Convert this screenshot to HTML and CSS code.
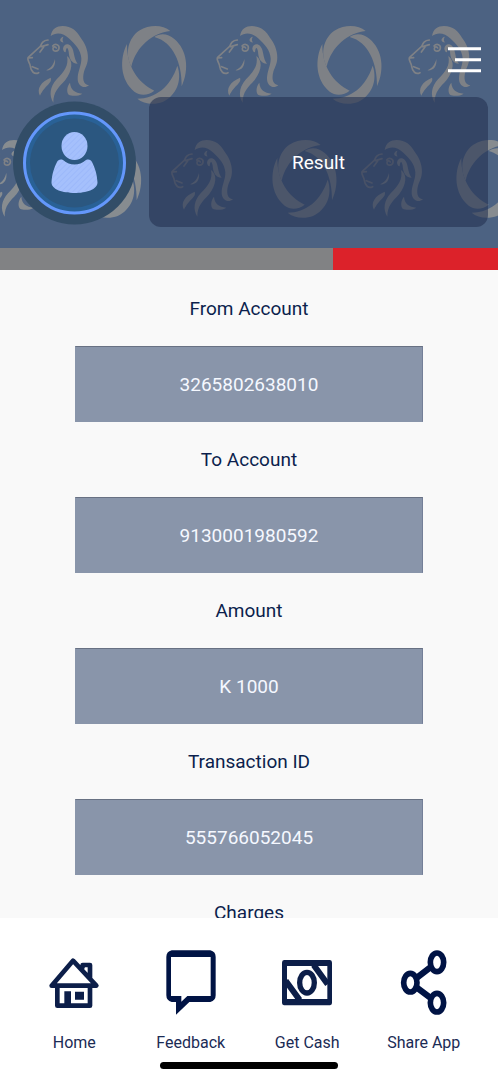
FILE: index.html
```html
<!DOCTYPE html>
<html lang="en">
<head>
<meta charset="utf-8">
<meta name="viewport" content="width=device-width, initial-scale=1">
<title>Result</title>
<link rel="stylesheet" href="styles.css">
</head>
<body>
<header class="header">
  <svg class="pattern" width="498" height="248" viewBox="0 0 1494 744" aria-hidden="true">
    <defs>
      <g id="lion">
        <path d="M72 30C76 8 90 0 108 0c27 1 42 14 54 35 12 16 17 27 20 42 6 30-4 42-10 60-5 20-3 38 15 41-14 12-33 3-34-18-1-22 12-42 11-63-1-25-20-44-36-59C110 20 88 18 72 30z"/>
        <path d="M121 90c20 15 16 44-5 72-20 22-36 35-36 68-14-22-10-48 10-70 23-23 37-42 31-70z"/>
        <path d="M72 155c6 17-17 22-32 54-11-21 3-42 32-54z"/>
        <path d="M130 170c2 22 15 30 37 33-12 8-32 8-41 3-8-10-4-27 4-36z"/>
        <path d="M109 68c2-19 27-19 32 12 3 17 7 27 12 33-19 0-26-17-27-36-3-14-7-15-9 2-5-1-7-5-8-11z"/>
        <path d="M85 99c3 23-10 36-27 34 14-6 22-16 27-34z"/>
        <path d="M101 39c5-7 9-8 9-6-4 7-2 13 1 16-8 1-12-4-10-10z"/>
        <g class="line">
          <path d="M64 42C49 43 45 52 41 61L5 94c-6 8 6 17 6 27 2 15 12 26 25 19M17 122l17 7M7 96l10-1M40 78l11-15M44 62l20-6M78 60c8-9 21-4 19 7-2 11-18 11-18 1 0-7 8-7 10-2"/>
        </g>
      </g>
      <g id="ring">
        <path d="M26 122C4 78 20 34 49 14 84-6 120-3 143 15 90 20 40 62 26 122z"/>
        <path d="M95 33c18-13 42-10 60 6 38 32 46 90 22 142C178 112 152 48 95 33z"/>
        <path d="M164 119c16 45-4 90-44 109-24 9-58 7-76-10 54 0 100-36 120-99z"/>
        <path d="M13 54c-1 66 32 116 82 140-17 14-42 17-60 3C-8 162-10 98 13 54z"/>
      </g>
    </defs>
    <g class="marks">
      <use href="#lion" x="80" y="78"/><use href="#ring" x="368" y="78"/>
      <use href="#lion" x="648" y="78"/><use href="#ring" x="954" y="78"/>
      <use href="#lion" x="1224" y="78"/>
    </g>
    <g class="marks warm">
      <use href="#lion" x="-66" y="420"/><use href="#ring" x="233" y="420"/>
      <use href="#lion" x="512" y="420"/><use href="#ring" x="819" y="420"/>
      <use href="#lion" x="1082" y="420"/><use href="#ring" x="1371" y="420"/>
    </g>
  </svg>
  <button class="menu" type="button" aria-label="Menu">
    <svg width="34" height="26" viewBox="0 0 34 26"><path d="M0 1.7h33M7 12.7h26M0 23.7h33"/></svg>
  </button>
  <div class="banner">
    <svg class="avatar" width="124" height="126" viewBox="0 0 124 126" role="img" aria-label="Profile">
      <defs>
        <pattern id="hatch" width="4" height="4" patternUnits="userSpaceOnUse" patternTransform="rotate(45)">
          <rect width="4" height="4" fill="#a5c0fc"/><rect width="1" height="4" fill="#9cb8fa"/>
        </pattern>
      </defs>
      <circle cx="62.5" cy="64" r="61.5" fill="#324d67"/>
      <circle cx="62.5" cy="64" r="50" fill="#296196" stroke="#6497fb" stroke-width="3"/>
      <circle cx="62.5" cy="64" r="44.5" fill="#2b5780"/>
      <ellipse cx="62.5" cy="47" rx="13" ry="14" fill="url(#hatch)"/>
      <path d="M51 61c7 6 16 6 23 0 3-1 5 0 6 2 3 6 5 12 5.500 20.500C85.500 97.500 39.500 97.500 39.500 83.500 40 75 42 69 45 63c1-2 3-3 6-2z" fill="url(#hatch)"/>
    </svg>
    <h1 class="title">Result</h1>
  </div>
</header>
<div class="stripe"></div>
<main class="details">
  <label class="label" for="from">From Account</label>
  <input class="field" id="from" value="3265802638010" readonly>
  <label class="label" for="to">To Account</label>
  <input class="field" id="to" value="9130001980592" readonly>
  <label class="label" for="amount">Amount</label>
  <input class="field" id="amount" value="K 1000" readonly>
  <label class="label" for="transaction">Transaction ID</label>
  <input class="field" id="transaction" value="555766052045" readonly>
  <label class="label" for="charges">Charges</label>
</main>
<footer class="footer">
  <nav class="nav">
    <a class="item" href="#home">
      <svg class="icon" viewBox="86 150 156 198" aria-hidden="true">
        <path d="M114 264v53h98v-53M97 257L161 182l70 75zM190 201v-6h22v38" fill="none" stroke="#0c1e49" stroke-width="14" stroke-linejoin="round" stroke-linecap="round"/>
        <path d="M135 274h20v44h-20zM167 275h27v24h-27z" fill="#0c1e49"/>
      </svg>
      <span>Home</span>
    </a>
    <a class="item" href="#feedback">
      <svg class="icon" viewBox="435 150 156 198" aria-hidden="true">
        <path fill-rule="evenodd" fill="#001344" d="M455 151h116q16 4 16 20v115q0 16-16 20h-63l-40 38v-38h-13q-16-4-16-20V171q0-16 16-20zM453 171v117h31v17l18-17h70V171z"/>
      </svg>
      <span>Feedback</span>
    </a>
    <a class="item" href="#cash">
      <svg class="icon" viewBox="93 150 156 198" aria-hidden="true">
        <path fill-rule="evenodd" fill="#0c1e49" d="M102 180h138q6 1 6 8v121q0 6-6 7H102q-6-1-6-7V188q0-7 6-8zM111 198v99h121v-99z"/>
        <path d="M107 242l42 58M191 195l42 58" stroke="#0c1e49" stroke-width="18"/>
        <ellipse cx="171" cy="248" rx="22" ry="31" fill="#fff" stroke="#0c1e49" stroke-width="16"/>
      </svg>
      <span>Get Cash</span>
    </a>
    <a class="item" href="#share">
      <svg class="icon" viewBox="443 150 156 198" aria-hidden="true">
        <g fill="#fff" stroke="#001344">
          <path d="M560 187l-80 61 80 60" fill="none" stroke-width="19"/>
          <ellipse cx="560" cy="187" rx="20" ry="28" stroke-width="17"/>
          <ellipse cx="480" cy="248" rx="20" ry="28" stroke-width="17"/>
          <ellipse cx="560" cy="308" rx="20" ry="28" stroke-width="17"/>
        </g>
      </svg>
      <span>Share App</span>
    </a>
  </nav>
  <div class="indicator"></div>
</footer>
</body>
</html>
```
FILE: styles.css
```css
* {
  box-sizing: border-box;
}

body {
  display: flex;
  flex-direction: column;
  height: 100vh;
  margin: 0;
  background: #f9f9f9;
  color: #0c1f4d;
  font-family: Roboto, "Liberation Sans", sans-serif;
  font-size: 19px;
}

.header {
  position: relative;
  flex: none;
  padding: 97px 10px 21px 12px;
  overflow: hidden;
  background: #4c6282;
}

.pattern {
  position: absolute;
  top: 0;
  left: 0;
}

.marks {
  fill: #7e8186;
  stroke: none;
}

.warm {
  fill: #878c90;
}

.line {
  fill: none;
  stroke: #7e8186;
  stroke-width: 5;
  stroke-linecap: round;
}

.menu {
  position: absolute;
  top: 47px;
  right: 16px;
  padding: 0;
  border: 0;
  background: none;
  line-height: 0;
}

.menu path {
  stroke: #fff;
  stroke-width: 3;
}

.banner {
  position: relative;
  display: flex;
  align-items: center;
  gap: 13px;
}

.avatar {
  flex: none;
}

.title {
  display: flex;
  flex: 1;
  align-items: center;
  justify-content: center;
  height: 130px;
  margin: 0;
  border-radius: 12px;
  background: rgba(37, 50, 82, 0.6);
  color: #fff;
  font-size: 19px;
  font-weight: 400;
}

.stripe {
  flex: none;
  height: 22px;
  background: linear-gradient(to right, #818284 66.8%, #dc222a 66.8%);
}

.details {
  display: flex;
  flex: 1;
  flex-direction: column;
  align-items: center;
  min-height: 0;
  padding-top: 1px;
  overflow: hidden;
}

.label {
  flex: none;
  line-height: 75px;
}

.field {
  flex: none;
  width: 70%;
  height: 76px;
  padding: 0;
  border: 1px solid #8995aa;
  border-top-color: #687183;
  border-right-color: #747f98;
  border-radius: 0;
  outline: 0;
  background: #8995aa;
  color: #f5f8ff;
  font: inherit;
  text-align: center;
}

.footer {
  flex: none;
  padding: 32px 16px 11px;
  background: #fff;
}

.nav {
  display: grid;
  grid-template-columns: repeat(4, 1fr);
}

.item {
  display: flex;
  flex-direction: column;
  align-items: center;
  gap: 16px;
  color: #1b2b55;
  font-size: 16px;
  line-height: 21px;
  text-decoration: none;
}

.icon {
  width: 52px;
  height: 66px;
}

.indicator {
  width: 178px;
  height: 7px;
  margin: 9px auto 0;
  border-radius: 4px;
  background: #000;
}
```
